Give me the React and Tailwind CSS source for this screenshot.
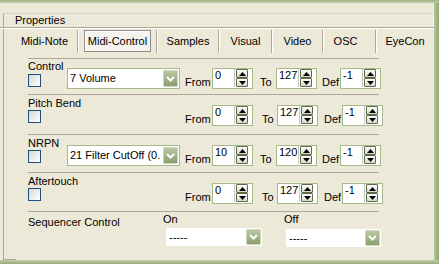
import React from "react";

const Tri = ({ up }) => (
  <svg width="7" height="4" viewBox="0 0 7 4">
    <path d={up ? "M0 4L3.5 0L7 4Z" : "M0 0L3.5 4L7 0Z"} fill="#000" />
  </svg>
);

const SpinBtn = ({ up }) => (
  <div className="flex h-[9px] w-[12px] items-center justify-center rounded-[1px] border border-[#5b6b45] bg-linear-to-b from-white to-[#d6dac6]">
    <Tri up={up} />
  </div>
);

const Spin = ({ value }) => (
  <div className="flex h-[21px] w-[41px] border border-[#a5b98a] bg-white">
    <div className="w-[21px] pl-[2px] leading-[13px]">{value}</div>
    <div className="h-[18px] w-px bg-[#c4c4c4]" />
    <div className="ml-px flex flex-col">
      <SpinBtn up />
      <SpinBtn />
    </div>
  </div>
);

const DropBtn = ({ className }) => (
  <div
    className={`flex w-[15px] items-center justify-center rounded-[1px] border border-[#cfd8bd] bg-linear-to-b from-[#b9c8a0] to-[#8c9f70] ${className}`}
  >
    <svg width="9" height="6" viewBox="0 0 9 6">
      <path d="M1 1L4.5 4.5L8 1" stroke="#fff" strokeWidth="2" fill="none" />
    </svg>
  </div>
);

const Combo = ({ text, seq, className }) => (
  <div
    className={`flex items-center border bg-white ${seq ? "border-white" : "border-[#a5b98a]"} ${className}`}
  >
    <div className="flex-1 overflow-hidden whitespace-nowrap pl-[2px] leading-[13px]">{text}</div>
    {seq ? <DropBtn className="h-[16px]" /> : <DropBtn className="mr-px h-[17px]" />}
  </div>
);

const Check = () => (
  <div className="h-[13px] w-[13px] border border-[#1c5180] bg-linear-to-br from-[#d8d8d2] to-white" />
);

const Line = () => <div className="h-px w-[351px] bg-[#aca899]" />;

const Row = ({ label, combo, from, to, h, pt, cb, ctl, wide }) => (
  <div className={`flex ${h}`}>
    <div className={`w-[39px] ${pt}`}>
      <div className="whitespace-nowrap leading-[13px]">{label}</div>
      <div className={cb}>
        <Check />
      </div>
    </div>
    <div className={`flex items-end self-start ${ctl}`}>
      {combo ? (
        <Combo text={combo} className="h-[21px] w-[113px]" />
      ) : (
        <div className="h-[21px] w-[113px]" />
      )}
      <span className="ml-[5px] w-[27px] leading-[13px]">From</span>
      <Spin value={from} />
      <span className={wide ? "ml-[9px] w-[15px] leading-[13px]" : "ml-[7px] w-[16px] leading-[13px]"}>To</span>
      <Spin value={to} />
      <span className={wide ? "ml-[6px] w-[18px] leading-[13px]" : "ml-[5px] w-[18px] leading-[13px]"}>Def</span>
      <Spin value="-1" />
    </div>
  </div>
);

const tabs = [
  { name: "Midi-Note", cls: "w-[73px] pl-[8px]" },
  { name: "Midi-Control", cls: "w-[77px]", active: true },
  { name: "Samples", cls: "w-[60px]" },
  { name: "Visual", cls: "w-[51px]" },
  { name: "Video", cls: "w-[49px]" },
  { name: "OSC", cls: "w-[51px] pr-[8px]" },
  { name: "EyeCon", cls: "w-[56px]" },
];

export default function App() {
  return (
    <div className="flex h-[264px] w-[439px] flex-col overflow-hidden bg-[#ECE9D8] font-['Liberation_Sans',Arial,sans-serif] text-[11px] text-black">
      <div className="h-[3px] bg-linear-to-b from-[#9db282] to-[#c3d0ac]" />
      <div className="flex flex-1">
        <div className="flex w-[434px] flex-col">
          <div className="h-[10px]" />
          <div className="ml-[3px] flex h-[14px] items-center border-l border-r border-t border-l-[#aca899] border-r-[#f4f3ee] border-t-[#d9d6c7] pl-[11px] leading-[13px]">
            Properties
          </div>
          <div className="h-px bg-[#aca899]" />
          <div className="h-px bg-white" />
          <div className="ml-[3px] flex flex-1 flex-col border-l border-[#aca899]">
            <div className="flex h-[24px] pt-px">
              {tabs.map((t, i) => (
                <React.Fragment key={t.name}>
                  {i > 0 && (
                    <div className="flex h-[23px]">
                      <div className="w-px bg-[#aca899]" />
                      <div className="w-px bg-white" />
                    </div>
                  )}
                  <div className={`flex h-[22px] items-center justify-center ${t.cls}`}>
                    {t.active ? (
                      <div className="flex h-[22px] w-[67px] items-center justify-center border border-[#8e8e8a] bg-[#f4f3ee] shadow-[inset_1px_1px_0_#fff]">
                        {t.name}
                      </div>
                    ) : (
                      t.name
                    )}
                  </div>
                </React.Fragment>
              ))}
            </div>
            <div className="h-[5px]" />
            <div className="ml-[24px] flex flex-col">
              <Line />
              <Row label="Control" combo="7 Volume" from="0" to="127" h="h-[35px]" pt="pt-px" cb="mt-px" ctl="mt-[9px]" />
              <Line />
              <Row label="Pitch Bend" from="0" to="127" h="h-[39px]" pt="pt-[2px]" cb="mt-0" ctl="mt-[10px]" wide />
              <Line />
              <Row label="NRPN" combo="21 Filter CutOff (0." from="10" to="120" h="h-[37px]" pt="pt-[2px]" cb="mt-0" ctl="mt-[10px]" />
              <Line />
              <Row label="Aftertouch" from="0" to="127" h="h-[38px]" pt="pt-[2px]" cb="mt-0" ctl="mt-[10px]" wide />
              <Line />
              <div className="flex h-[47px]">
                <div className="w-[135px] whitespace-nowrap pt-[4px] leading-[13px]">Sequencer Control</div>
                <div className="w-[120px] pt-px">
                  <div className="leading-[13px]">On</div>
                  <Combo seq text="-----" className="ml-[3px] mt-[2px] h-[18px] w-[96px]" />
                </div>
                <div className="pt-px">
                  <div className="ml-px leading-[13px]">Off</div>
                  <Combo seq text="-----" className="ml-[3px] mt-[3px] h-[18px] w-[95px]" />
                </div>
              </div>
            </div>
            <div className="mt-auto h-px w-[12px] bg-[#aca899]" />
          </div>
        </div>
        <div className="w-[5px] bg-linear-to-r from-[#b7c79c] to-[#91a676]" />
      </div>
      <div className="h-[4px] bg-linear-to-b from-[#c3d0ab] to-[#94a97a]" />
    </div>
  );
}
